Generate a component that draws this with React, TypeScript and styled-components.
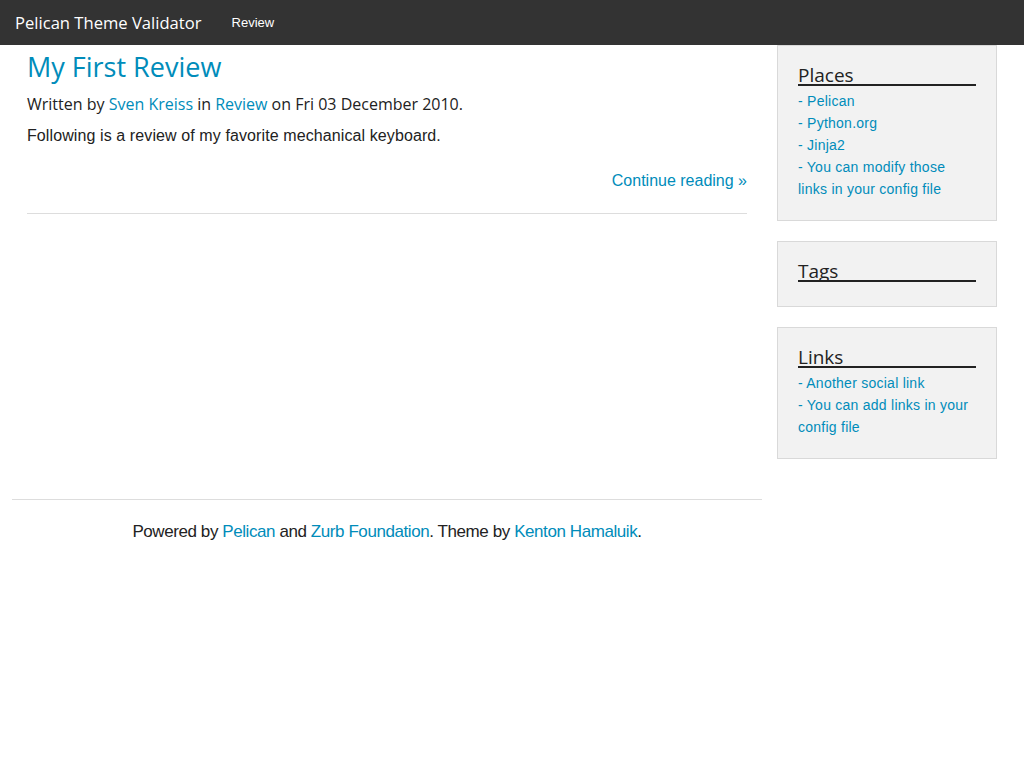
import React from "react";
import styled, { createGlobalStyle } from "styled-components";

const Global = createGlobalStyle`
  html, body { margin: 0; padding: 0; background: #fff; }
  body { font-family: "Liberation Sans", Arial, sans-serif; color: #222; font-size: 16px; }
  a { color: #008cba; text-decoration: none; }
`;

const TopBar = styled.nav`
  height: 45px;
  background: #333;
  display: flex;
  align-items: center;
`;

const Brand = styled.a`
  font-family: "Open Sans", sans-serif;
  font-size: 16.6px;
  color: #fff;
  padding: 0 15px;
  line-height: 45px;
`;

const NavItem = styled.a`
  font-family: "Liberation Sans", Arial, sans-serif;
  font-size: 13px;
  color: #fff;
  padding: 0 15px;
  line-height: 45px;
`;

const Row = styled.div`
  width: 1000px;
  margin: 0 auto;
  display: flex;
  align-items: flex-start;
`;

const Main = styled.div`
  width: 750px;
  box-sizing: border-box;
`;

const Content = styled.div`
  padding: 0 15px;
`;

const Side = styled.aside`
  width: 250px;
  box-sizing: border-box;
  padding: 0 15px;
  display: flex;
  flex-direction: column;
  gap: 20px;
`;

const Article = styled.article`
  border-bottom: 1px solid #ddd;
  padding-bottom: 20px;
`;

const Title = styled.h1`
  font-family: "Open Sans", sans-serif;
  font-weight: 400;
  font-size: 27px;
  line-height: 40px;
  margin: 2px 0 0;
  a { color: #008cba; }
`;

const Meta = styled.p`
  font-family: "Open Sans", sans-serif;
  font-size: 16px;
  line-height: 24px;
  margin: 5px 0 0;
  color: #222;
`;

const Summary = styled.p`
  font-size: 16px;
  line-height: 24px;
  letter-spacing: 0.1px;
  margin: 8px 0 0;
`;

const More = styled.p`
  text-align: right;
  font-size: 16px;
  line-height: 24px;
  margin: 21px 0 0;
`;

const Spacer = styled.div`
  height: 285px;
`;

const Footer = styled.footer`
  border-top: 1px solid #ddd;
  text-align: center;
  font-size: 17px;
  padding-top: 21px;
  line-height: 22px;
  letter-spacing: -0.42px;
`;

const Panel = styled.div`
  background: #f2f2f2;
  border: 1px solid #d9d9d9;
  padding: 20px;
`;

const PanelHead = styled.h5`
  font-family: "Open Sans", sans-serif;
  font-weight: 400;
  font-size: 19px;
  line-height: 18px;
  color: #222;
  margin: 0 0 4px;
  border-bottom: 2px solid #222;
`;

const LinkList = styled.ul`
  list-style: none;
  margin: 0;
  padding: 0;
  font-size: 14px;
  line-height: 22px;
  letter-spacing: 0.25px;
`;

const PanelLink = styled.li`
  margin: 0;
`;

const places = ["Pelican", "Python.org", "Jinja2", "You can modify those links in your config file"];
const links = ["Another social link", "You can add links in your config file"];

export default function App() {
  return (
    <>
      <Global />
      <TopBar>
        <Brand href="#">Pelican Theme Validator</Brand>
        <NavItem href="#">Review</NavItem>
      </TopBar>
      <Row>
        <Main>
          <Content>
            <Article>
              <Title><a href="#">My First Review</a></Title>
              <Meta>
                Written by <a href="#">Sven Kreiss</a> in <a href="#">Review</a> on Fri 03 December 2010.
              </Meta>
              <Summary>Following is a review of my favorite mechanical keyboard.</Summary>
              <More><a href="#">Continue reading »</a></More>
            </Article>
          </Content>
          <Spacer />
          <Footer>
            Powered by <a href="#">Pelican</a> and <a href="#">Zurb Foundation</a>. Theme by <a href="#">Kenton Hamaluik</a>.
          </Footer>
        </Main>
        <Side>
          <Panel>
            <PanelHead>Places</PanelHead>
            <LinkList>
              {places.map((p) => (
                <PanelLink key={p}><a href="#">- {p}</a></PanelLink>
              ))}
            </LinkList>
          </Panel>
          <Panel>
            <PanelHead>Tags</PanelHead>
          </Panel>
          <Panel>
            <PanelHead>Links</PanelHead>
            <LinkList>
              {links.map((p) => (
                <PanelLink key={p}><a href="#">- {p}</a></PanelLink>
              ))}
            </LinkList>
          </Panel>
        </Side>
      </Row>
    </>
  );
}
